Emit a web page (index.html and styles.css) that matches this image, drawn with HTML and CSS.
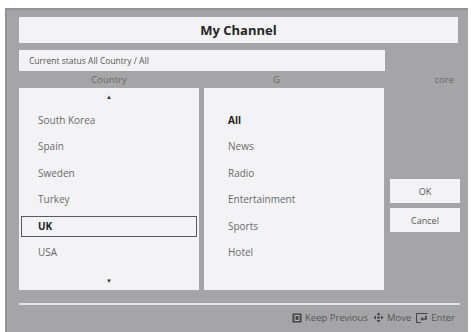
FILE: index.html
```html
<!DOCTYPE html>
<html lang="en">
<head>
<meta charset="UTF-8">
<title>My Channel</title>
<link rel="stylesheet" href="styles.css">
</head>
<body>
<div class="panel">
<h1 class="title">My Channel</h1>
<div class="status">Current status All Country / All</div>
<div class="cols">
<div class="label label-country">Country</div>
<div class="label label-genre">G</div>
<div class="label label-score">core</div>

<ul class="list list-country">
<li class="arrow">&#9650;</li>
<li>South Korea</li>
<li>Spain</li>
<li>Sweden</li>
<li>Turkey</li>
<li class="sel">UK</li>
<li>USA</li>
<li class="arrow arrow-down">&#9660;</li>
</ul>

<ul class="list list-genre">
<li class="bold">All</li>
<li>News</li>
<li>Radio</li>
<li>Entertainment</li>
<li>Sports</li>
<li>Hotel</li>
</ul>

<div class="btns">
<button type="button">OK</button>
<button type="button">Cancel</button>
</div>
</div>
<div class="sep"></div>
<div class="help">
<svg class="ico" width="10" height="10" viewBox="0 0 10 10"><rect x="0.5" y="0.5" width="9" height="9" fill="#444"/><rect x="3" y="2.5" width="4" height="5" fill="none" stroke="#bbb" stroke-width="1"/></svg>
<span>Keep Previous</span>
<svg class="ico" width="11" height="11" viewBox="0 0 11 11"><path d="M5.5 0.5 L7.5 3 H3.5 Z M5.5 10.5 L3.5 8 H7.5 Z M0.5 5.5 L3 3.5 V7.5 Z M10.5 5.5 L8 7.5 V3.5 Z" fill="#444"/><circle cx="5.5" cy="5.5" r="1.3" fill="#444"/></svg>
<span>Move</span>
<svg class="ico" width="12" height="10" viewBox="0 0 12 10"><path d="M0.5 0.5 H11.5 M0.5 0.5 V9.5 H5" fill="none" stroke="#444" stroke-width="1"/><path d="M10 2.5 V6 H6" fill="none" stroke="#444" stroke-width="1.6"/><path d="M6.5 3.8 L4.5 6 L6.5 8.2 Z" fill="#444"/></svg>
<span>Enter</span>
</div>
</div>
</body>
</html>
```

FILE: styles.css
```css
html, body { margin: 0; padding: 0; background: #fff; font-family: 'Open Sans', 'Noto Sans', sans-serif; overflow: hidden; }
.panel { box-sizing: border-box; margin: 8px 0 0 5px; width: 463px; height: 324px; padding: 7px 0 0 12px; background: #a5a5a7; border-top: 2px solid #939395; border-left: 2px solid #939395; }
.title { margin: 0; height: 26px; line-height: 26px; width: 439px; background: #f3f3f6; text-align: center; font-size: 13px; font-weight: bold; color: #262626; }
.status { margin-top: 7px; width: 356px; height: 21px; line-height: 21px; padding-left: 10px; background: #f3f3f6; font-size: 8.5px; color: #555; }
.cols { display: grid; grid-template-columns: 180px 180px 76px; grid-template-rows: 17px 202px; column-gap: 5px; }
.label { font-size: 9.5px; line-height: 17px; color: #686868; }
.label-country { text-align: center; }
.label-genre { padding-left: 69px; }
.label-score { text-align: right; padding-right: 11px; }
.list { list-style: none; margin: 0; padding: 19px 0 0; background: #f3f3f6; display: flex; flex-direction: column; }
.list li { height: 19px; line-height: 19px; margin: 2.75px 2px; border: 1px solid transparent; font-size: 10px; color: #6a6a6a; }
.list-country li { padding-left: 16px; }
.list-genre li { padding-left: 21px; }
.list li.sel { border-color: #5a5a5a; font-weight: bold; color: #1e1e1e; }
.list li.bold { font-weight: bold; color: #1e1e1e; }
.list-country { padding-top: 0; }
.list li.arrow { margin: 0; height: 19px; line-height: 19px; padding: 0; border: none; text-align: center; font-size: 6px; color: #333; }
.list li.arrow-down { margin-top: auto; height: 14px; line-height: 10px; }
.btns { display: flex; flex-direction: column; gap: 5px; padding: 91px 0 0 1px; }
.btns button { width: 70px; height: 24px; padding: 0; border: none; background: #f3f3f6; font-family: inherit; font-size: 9px; color: #555; }
.sep { margin-top: 13px; width: 441px; height: 2px; background: #e4e4e7; }
.help { display: flex; justify-content: flex-end; align-items: center; gap: 3px; width: 436px; margin-top: 6px; font-size: 9.5px; color: #555; }
.help .ico { margin-left: 2px; }
```
